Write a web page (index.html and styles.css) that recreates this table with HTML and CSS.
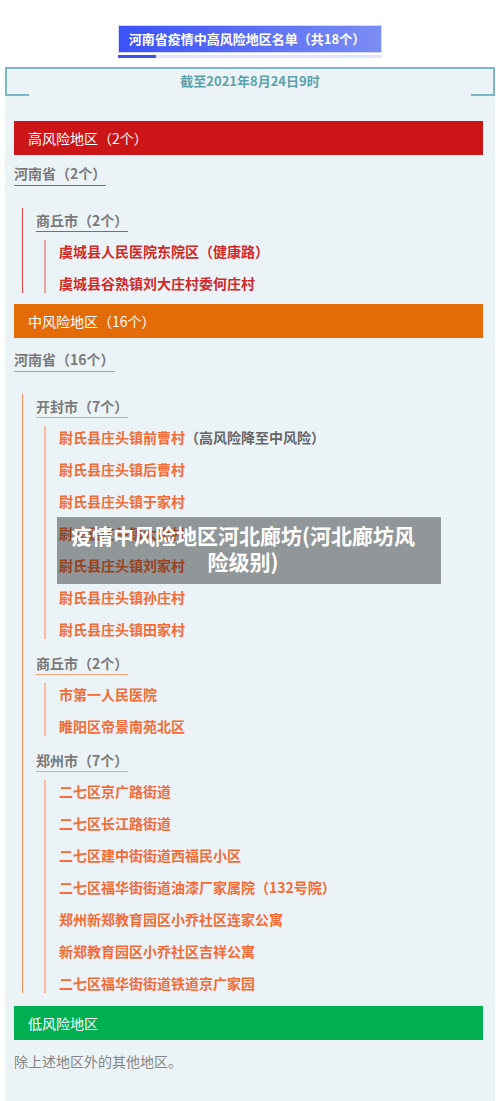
FILE: index.html
```html
<!DOCTYPE html>
<html>
<head>
  <meta charset="utf-8">
  <title>河南省疫情中高风险地区名单</title>
  <link rel="stylesheet" href="styles.css">
</head>
<body>
  <div class="head">
    <div class="title">河南省疫情中高风险地区名单（共18个）</div>
    <div class="title-line"><span></span></div>
  </div>

  <div class="panel">
    <div class="date-frame">截至2021年8月24日9时</div>

    <section class="level high">
      <div class="level-bar">高风险地区（2个）</div>
      <div class="province">河南省（2个）</div>
      <div class="cities">
        <div class="city">
          <div class="city-name">商丘市（2个）</div>
          <ul class="places">
            <li>虞城县人民医院东院区（健康路）</li>
            <li>虞城县谷熟镇刘大庄村委何庄村</li>
          </ul>
        </div>
      </div>
    </section>

    <section class="level mid">
      <div class="level-bar">中风险地区（16个）</div>
      <div class="province">河南省（16个）</div>
      <div class="cities">
        <div class="city">
          <div class="city-name">开封市（7个）</div>
          <ul class="places">
            <li>尉氏县庄头镇前曹村<em>（高风险降至中风险）</em></li>
            <li>尉氏县庄头镇后曹村</li>
            <li>尉氏县庄头镇于家村</li>
            <li>尉氏县庄头镇大岗村</li>
            <li>尉氏县庄头镇刘家村</li>
            <li>尉氏县庄头镇孙庄村</li>
            <li>尉氏县庄头镇田家村</li>
          </ul>
        </div>
        <div class="city">
          <div class="city-name">商丘市（2个）</div>
          <ul class="places">
            <li>市第一人民医院</li>
            <li>睢阳区帝景南苑北区</li>
          </ul>
        </div>
        <div class="city">
          <div class="city-name">郑州市（7个）</div>
          <ul class="places">
            <li>二七区京广路街道</li>
            <li>二七区长江路街道</li>
            <li>二七区建中街街道西福民小区</li>
            <li>二七区福华街街道油漆厂家属院（132号院）</li>
            <li>郑州新郑教育园区小乔社区连家公寓</li>
            <li>新郑教育园区小乔社区吉祥公寓</li>
            <li>二七区福华街街道铁道京广家园</li>
          </ul>
        </div>
      </div>
    </section>

    <section class="level low">
      <div class="level-bar">低风险地区</div>
      <p class="note">除上述地区外的其他地区。</p>
    </section>
  </div>

  <div class="caption">疫情中风险地区河北廊坊(河北廊坊风险级别)</div>
</body>
</html>
```

FILE: styles.css
```css
body {
  margin: 0;
  background: #fff;
  font-family: "Noto Sans CJK SC", "Noto Sans", sans-serif;
  position: relative;
}

.head {
  padding-top: 25px;
}
.title {
  width: 264px;
  height: 28px;
  margin: 0 auto;
  box-sizing: border-box;
  border: 1px solid #d3d8fb;
  background: linear-gradient(to right, #3b51f6, #7b8df3);
  color: #fff;
  font-size: 13px;
  font-weight: bold;
  line-height: 26px;
  text-align: center;
  padding-right: 6px;
}
.title-line {
  width: 264px;
  height: 3px;
  margin: 2px auto 0;
  background: #e2e6fa;
}
.title-line span {
  display: block;
  width: 38px;
  height: 3px;
  background: #3b51f6;
}

.panel {
  --frame: #7ab7c8;

  margin: 9px 5px 0;
  padding-bottom: 40px;
  background: #ebf3f7;
}
.date-frame {
  position: relative;
  height: 27px;
  border: 2px solid var(--frame);
  border-bottom: none;
  color: #5ba2aa;
  font-size: 13px;
  font-weight: bold;
  line-height: 24px;
  text-align: center;
}
.date-frame::before,
.date-frame::after {
  content: "";
  position: absolute;
  bottom: 0;
  width: 24px;
  height: 2px;
  background: var(--frame);
}
.date-frame::before {
  left: -2px;
}
.date-frame::after {
  right: -2px;
}

.level {
  --bar: #cc1517;
  --text: #cf2a2a;
  --line: #d94545;
  --line-soft: #e6a3a3;

  margin-top: 11px;
}
.level.high {
  margin-top: 25px;
}
.level.mid {
  --bar: #e36c09;
  --text: #f26c38;
  --line: #f58c5a;
  --line-soft: #f6bca0;
}
.level.low {
  --bar: #00b050;

  margin-top: 13px;
}

.level-bar {
  height: 34px;
  margin: 0 12px 0 9px;
  padding-left: 14px;
  background: var(--bar);
  color: #fff;
  font-size: 14px;
  line-height: 34px;
}

.province,
.city-name {
  width: fit-content;
  color: #7a7a7a;
  font-size: 14px;
  font-weight: bold;
  line-height: 20px;
  border-bottom: 1px solid var(--line);
}
.province {
  margin: 8px 0 0 9px;
  padding-bottom: 2px;
}
.level.mid .province {
  margin-top: 11px;
}
.city-name {
  padding-bottom: 1px;
}
.level.mid .city-name {
  border-bottom-color: #f7a47c;
}

.cities {
  margin: 22px 0 0 17px;
  padding: 2px 0 0 13px;
  border-left: 1px solid var(--line);
}
.city + .city {
  margin-top: 14px;
}

.places {
  list-style: none;
  margin: 8px 0 0 8px;
  padding: 1px 0 0 13px;
  border-left: 2px solid var(--line-soft);
}
.places li {
  color: var(--text);
  font-size: 14px;
  font-weight: bold;
  line-height: 20px;
}
.places li + li {
  margin-top: 12px;
}
.places em {
  font-style: normal;
  color: #666;
}

.note {
  margin: 11px 0 0 9px;
  color: #858585;
  font-size: 14px;
  line-height: 20px;
}

.caption {
  position: absolute;
  left: 57px;
  top: 517px;
  width: 384px;
  height: 67px;
  box-sizing: border-box;
  padding: 5px 20px 0 8px;
  background: rgba(0, 0, 0, 0.38);
  color: #fff;
  font-size: 21px;
  font-weight: bold;
  line-height: 26px;
  text-align: center;
}
```
